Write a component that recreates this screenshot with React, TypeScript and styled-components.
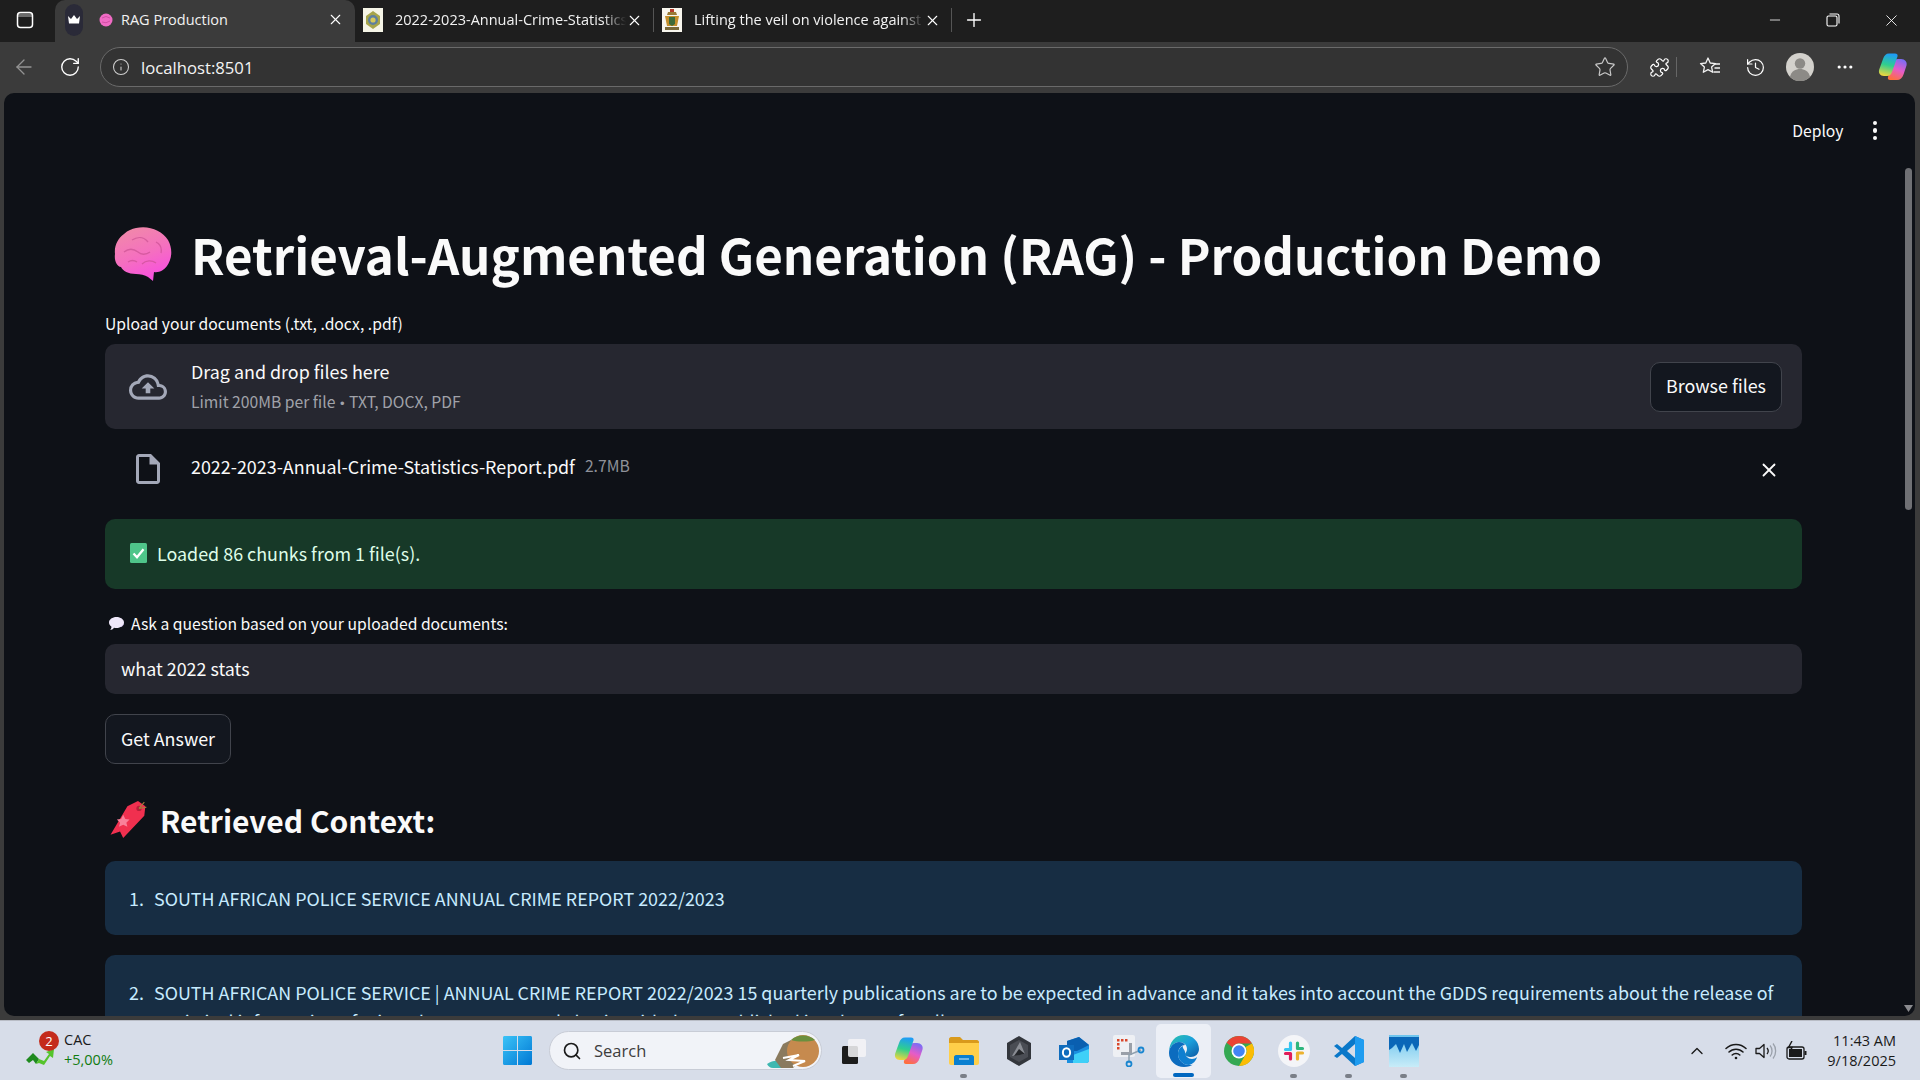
import React from "react";
import styled, { createGlobalStyle } from "styled-components";
import { ArrowLeft, RotateCw, Info, Star, Puzzle, History, MoreHorizontal, X, Plus, Minus, Search, ChevronUp } from "lucide-react";
import { MdOutlineCloudUpload, MdOutlineInsertDriveFile } from "react-icons/md";

const SANS = `"Noto Sans CJK SC", "Source Sans Pro", "Noto Sans", sans-serif`;
const UI = `"Open Sans", "Noto Sans", sans-serif`;

const Global = createGlobalStyle`
  html, body { margin: 0; padding: 0; height: 100%; background: #1f1f1f; overflow: hidden; }
  * { box-sizing: border-box; }
`;

const Screen = styled.div`
  width: 1920px; height: 1080px; display: flex; flex-direction: column; overflow: hidden;
  font-family: ${SANS}; background: #3b3b3b;
`;

/* ---------- tab strip ---------- */
const TabStrip = styled.div`
  height: 42px; background: #1e1e1e; display: flex; align-items: stretch; flex: none; color: #fff; font-family: ${UI};
`;
const SideToggle = styled.div`
  width: 55px; display: flex; align-items: center; justify-content: center; padding-right: 6px; padding-bottom: 2px;
`;
const Tab = styled.div<{ $active?: boolean; $w: number }>`
  width: ${p => p.$w}px; flex: none; display: flex; align-items: center;
  padding: 0 ${p => (p.$active ? 11 : 10)}px ${p => (p.$active ? 3 : 0)}px ${p => (p.$active ? 10 : 8)}px;
  background: ${p => (p.$active ? "#3b3b3b" : "transparent")};
  border-radius: ${p => (p.$active ? "10px 10px 0 0" : "0")};
  border-right: ${p => (p.$active ? "none" : "1px solid #555")};
  margin: ${p => (p.$active ? "0" : "8px 0 10px 0")};
`;
const TabTitle = styled.div<{ $fade?: boolean }>`
  flex: 1; min-width: 0; white-space: nowrap; overflow: hidden; font-size: 14.5px; line-height: 20px; color: #f2f2f2;
  ${p => p.$fade && `-webkit-mask-image: linear-gradient(90deg, #000 90%, transparent 100%); mask-image: linear-gradient(90deg, #000 90%, transparent 100%);`}
`;
const TabFavicon = styled.span`
  width: 20px; height: 24px; flex: none; margin-right: 12px; display: block;
`;
const CrownBadge = styled.span`
  width: 18px; height: 32px; border-radius: 9px; background: #2a2a38; display: flex; align-items: center; justify-content: center; flex: none; margin-right: 16px;
`;
const PinkDot = styled.span`
  width: 14px; height: 14px; flex: none; margin-right: 8px; display: block;
`;
const NewTab = styled.div`
  width: 44px; display: flex; align-items: center; justify-content: center; padding-bottom: 2px;
`;
const WindowControls = styled.div`
  margin-left: auto; display: flex; align-items: center; padding-bottom: 2px;
`;
const WinBtn = styled.div`
  width: 58px; height: 40px; display: flex; align-items: center; justify-content: center;
`;

/* ---------- toolbar ---------- */
const Toolbar = styled.div`
  height: 50px; flex: none; background: #3b3b3b; display: flex; align-items: center; color: #fff; font-family: ${UI};
`;
const NavBtn = styled.div<{ $w: number; $dim?: boolean }>`
  width: ${p => p.$w}px; flex: none; display: flex; align-items: center; justify-content: center;
  opacity: ${p => (p.$dim ? 0.45 : 1)};
`;
const Omnibox = styled.div`
  width: 1528px; height: 40px; flex: none; border: 1.5px solid #6a6a6a; border-radius: 20px; background: #333;
  display: flex; align-items: center; padding: 0 11px; margin: 0 14px 0 8px;
`;
const Url = styled.div`
  flex: 1; font-size: 16.7px; margin-left: 11px; color: #f4f4f4;
`;
const ToolSep = styled.div`
  width: 1px; height: 20px; background: #666; flex: none; margin-right: 7px;
`;
const Avatar = styled.svg`
  width: 28px; height: 28px; flex: none; display: block;
`;

/* ---------- page ---------- */
const Viewport = styled.div`
  flex: 1; min-height: 0; margin: 1px 5px 4px 4px; background: #0e1117; border-radius: 10px; position: relative; overflow: hidden; color: #fafafa;
`;
const AppHeader = styled.div`
  height: 75px; display: flex; align-items: center; justify-content: flex-end; padding: 0 30px 0 0; gap: 21px;
`;
const Deploy = styled.div`
  font-size: 15.7px; font-weight: 400; line-height: 24px;
`;
const Kebab = styled.div`
  display: flex; flex-direction: column; gap: 3px; padding: 0 8px;
`;
const KebabDot = styled.span`
  width: 4.5px; height: 4.5px; border-radius: 50%; background: #fafafa; display: block;
`;
const Main = styled.main`
  padding: 0 113px 0 101px;
`;
const TitleRow = styled.h1`
  margin: 43px 0 0; height: 86px; display: flex; align-items: center; font-size: 49.25px; font-weight: 700; line-height: 86px; white-space: nowrap; gap: 19px; padding-left: 9px;
`;
const FieldLabel = styled.div`
  font-size: 15.7px; line-height: 24px; margin-top: 15px; height: 24px; display: flex; align-items: center; gap: 6px;
`;
const Dropzone = styled.div`
  height: 85px; margin-top: 8px; background: #262730; border-radius: 10px; display: flex; align-items: center; padding: 0 20px;
`;
const DropIcon = styled.div`
  width: 38px; margin-right: 24px; margin-left: 4px; color: #a3a8b8; display: flex; justify-content: center; align-items: center;
`;
const DropText = styled.div`
  flex: 1; display: flex; flex-direction: column; gap: 5px; padding-top: 2px;
`;
const DropTitle = styled.div`
  font-size: 17.9px; line-height: 26px;
`;
const DropSub = styled.div`
  font-size: 15.7px; line-height: 26px; color: #a0a2a9;
`;
const Bullet = styled.span`
  font-family: "Liberation Sans", sans-serif; font-size: 13px; margin: 0 1px;
`;
const OutlineButton = styled.div<{ $w: number; $h: number }>`
  width: ${p => p.$w}px; height: ${p => p.$h}px; flex: none; background: #13171f; border: 1px solid #41444c; border-radius: 10px; display: flex; align-items: center; justify-content: center; padding-bottom: 3px; font-size: 17.9px; line-height: 26px;
`;
const FileRow = styled.div`
  height: 90px; display: flex; align-items: center; padding: 0 22px 0 25px;
`;
const FileIcon = styled.div`
  width: 36px; margin-right: 25px; color: #a3a8b8; display: flex; justify-content: center; margin-top: -11px;
`;
const FileName = styled.div`
  font-size: 17.9px; line-height: 26px; margin-top: -17px;
`;
const FileSize = styled.div`
  font-size: 15.7px; line-height: 26px; color: #8f9199; margin-left: 10px; margin-top: -16px;
`;
const FileClose = styled.div`
  margin-left: auto; display: flex; margin-top: -9px;
`;
const Success = styled.div`
  height: 70px; background: #173928; border-radius: 10px; display: flex; align-items: center; padding: 0 20px 3px 25px; gap: 10px; color: #dffde9; font-size: 17.9px; line-height: 26px;
`;
const Input = styled.div`
  height: 50px; margin-top: 8px; background: #262730; border-radius: 10px; display: flex; align-items: center; padding: 0 16px 3px; font-size: 17.9px; line-height: 26px;
`;
const AskLabel = styled(FieldLabel)`
  margin-top: 23px; padding-left: 4px; gap: 7px;
`;
const ButtonWrap = styled.div`
  margin-top: 20px; display: flex;
`;
const Heading = styled.h3`
  margin: 34px 0 0; height: 44px; display: flex; align-items: center; gap: 10px; font-size: 30px; line-height: 44px; font-weight: 700; white-space: nowrap; padding-left: 3px;
`;
const Notice = styled.div<{ $first?: boolean }>`
  margin-top: ${p => (p.$first ? 19 : 20)}px; background: #172d43; border-radius: 10px; padding: 23px 20px 22px 24px; color: #c7ebff; font-size: 17.9px; line-height: 29px; display: flex;
`;
const NoticeNum = styled.span`
  width: 25px; flex: none;
`;
const NoticeBody = styled.span`
  flex: 1; min-width: 0;
`;
const ScrollTrack = styled.div`
  position: absolute; top: 0; right: 3px; bottom: 0; width: 7px;
`;
const ScrollThumb = styled.div`
  position: absolute; top: 75px; height: 342px; left: 0; right: 0; background: #6f7074; border-radius: 4px;
`;
const ScrollArrow = styled.svg`
  position: absolute; left: -1px; bottom: 4px; width: 9px; height: 7px;
`;

/* ---------- taskbar ---------- */
const Taskbar = styled.div`
  height: 60px; flex: none; background: #d7dde9; border-top: 1px solid #b9bdc6; display: flex; align-items: center; color: #1a1a1a; font-family: ${UI};
`;
const Widget = styled.div`
  width: 490px; flex: none; display: flex; align-items: center; padding-left: 26px; gap: 9px;
`;
const WidgetIcon = styled.div`
  position: relative; width: 29px; height: 38px; flex: none;
`;
const WidgetBadge = styled.div`
  position: absolute; top: -1px; left: 13px; width: 20px; height: 20px; border-radius: 50%; background: #c42b1c; color: #fff; font-size: 13px; line-height: 20px; text-align: center;
`;
const WidgetText = styled.div`
  display: flex; flex-direction: column; font-size: 14.5px; line-height: 20px; margin-top: -2px;
`;
const WidgetDelta = styled.span`
  color: #107c10; font-size: 14.5px;
`;
const TaskSlot = styled.div<{ $active?: boolean; $dot?: boolean }>`
  width: 55px; height: 54px; flex: none; display: flex; align-items: center; justify-content: center; position: relative; border-radius: 5px;
  background: ${p => (p.$active ? "#eceff6" : "transparent")};
  ${p => p.$active && `&::after { content: ""; position: absolute; bottom: 1px; left: 17px; width: 21px; height: 4px; border-radius: 2px; background: #0067c0; }`}
  ${p => p.$dot && `&::after { content: ""; position: absolute; bottom: 0px; left: 24px; width: 7px; height: 4px; border-radius: 2px; background: #7a7f88; }`}
`;
const SearchPill = styled.div`
  width: 273px; height: 39px; flex: none; margin: 0 4px; background: #f1f3f8; border-radius: 20px; border: 1px solid #c8ccd6; display: flex; align-items: center; padding: 0 2px 0 12px; color: #3d3d3d; font-size: 16.5px; gap: 12px;
`;
const SearchText = styled.span`
  flex: 1;
`;
const Tray = styled.div`
  margin-left: auto; display: flex; align-items: center; padding-right: 24px;
`;
const TrayItem = styled.div<{ $w: number }>`
  width: ${p => p.$w}px; flex: none; display: flex; align-items: center; justify-content: center;
`;
const Clock = styled.div`
  display: flex; flex-direction: column; align-items: flex-end; font-size: 14.5px; line-height: 20px; margin-left: 13px; color: #1a1a1a;
`;

/* ---------- drawings ---------- */
const SidePanelIcon = () => (
  <svg width="18" height="18" viewBox="0 0 18 18" fill="none" stroke="#fff" strokeWidth="1.5">
    <rect x="1.5" y="1.5" width="15" height="15" rx="3" />
    <path d="M1.8 2.5h14.4v3.5H1.8z" fill="#fff" fillOpacity=".35" stroke="none" />
  </svg>
);
const Crown = () => (
  <svg width="14" height="12" viewBox="0 0 14 12"><path d="M1 2l3 3 3-4 3 4 3-3-1 7.5H2z" fill="#fff" /></svg>
);
const PinkBrain = () => (
  <PinkDot as="svg" viewBox="0 0 14 14"><ellipse cx="7" cy="7" rx="6.5" ry="6.5" fill="#f06bc4" /><path d="M3 5q4-3 8 0M3 9q4 2 8-1" stroke="#d24fa6" fill="none" /></PinkDot>
);
const CrestFav = () => (
  <TabFavicon as="svg" viewBox="0 0 20 24">
    <rect width="20" height="24" fill="#f5f4e6" />
    <path d="M10 3l7 5v8l-7 5-7-5V8z" fill="#a6a44a" />
    <circle cx="10" cy="12" r="5" fill="#5d7fa0" />
    <circle cx="10" cy="12" r="2.6" fill="#d6c85a" />
  </TabFavicon>
);
const ArmsFav = () => (
  <TabFavicon as="svg" viewBox="0 0 20 24">
    <rect width="20" height="24" fill="#f8f6ee" />
    <path d="M6 4h8l1 3H5z" fill="#9a7a35" />
    <path d="M3 8h14l-2 10H5z" fill="#c58f2c" />
    <path d="M7 9h6v7l-3 2-3-2z" fill="#3e6b3a" />
    <path d="M3 19h14v3H3z" fill="#7a6a3a" />
    <path d="M8 1h4v3H8z" fill="#b33a2a" />
  </TabFavicon>
);
const FavList = () => (
  <svg width="22" height="22" viewBox="0 0 22 22" fill="none" stroke="#f0f0f0" strokeWidth="1.3" strokeLinejoin="round">
    <path d="M9 2l2.2 5 5.3.6-3.900 3.5 1.1 5.2L9 13.6 4.3 16.3l1.1-5.2L1.5 7.6 6.8 7z" />
    <path d="M15 8h6M15.5 12H21M14.5 16H21" />
  </svg>
);
const CopilotIcon = ({ id, size = 30 }: { id: string; size?: number }) => (
  <svg width={size} height={size} viewBox="0 0 30 30">
    <defs>
      <linearGradient id={`${id}A`} x1="0.5" y1="0" x2="0.3" y2="1"><stop offset="0" stopColor="#1e9cf5" /><stop offset=".5" stopColor="#30cf8e" /><stop offset="1" stopColor="#f3d63c" /></linearGradient>
      <linearGradient id={`${id}B`} x1="0.7" y1="0" x2="0.3" y2="1"><stop offset="0" stopColor="#7a6cf5" /><stop offset=".5" stopColor="#e65cc8" /><stop offset="1" stopColor="#ff6f3c" /></linearGradient>
    </defs>
    <path d="M20 7h3c4 0 6.5 3 5.5 6.5l-3 9C24.5 26 22 28 19 28h-7c-2 0-2.5-1.5-2-3l5-14c.8-2.5 2.5-4 5-4z" fill={`url(#${id}B)`} />
    <path d="M11 1.5h6c2 0 3 1.3 2.5 3L14 20c-.9 2.5-2.5 4-5 4H6c-4 0-5.800-3-4.800-6.500l4-11C6.200 3.500 8 1.500 11 1.500z" fill={`url(#${id}A)`} />
  </svg>
);
const BrainEmoji = () => (
  <svg width="58" height="56" viewBox="0 0 58 56">
    <defs>
      <linearGradient id="brainG" x1="0.2" y1="0" x2="0.6" y2="1"><stop offset="0" stopColor="#f08aa8" /><stop offset=".55" stopColor="#f56fc0" /><stop offset="1" stopColor="#f84fe0" /></linearGradient>
    </defs>
    <path d="M22 2c12-3 26 2 32 12 5 9 4 19-1 26-3 4-8 7-13 6l-1 9-5-4c-3-2-8-3-12-3-8 0-13-3-15-7-4-1-7-6-6-13C0 20 4 12 10 8c4-4 8-5 12-6z" fill="url(#brainG)" />
    <path d="M18 14c6-4 12-3 16 2M10 26c5-4 10-3 14 0 3 3 8 3 12 0M28 38c4-4 10-4 14-1M42 16c4 2 6 6 5 11M14 36c3-2 6-2 9 0" stroke="#c74f90" strokeWidth="1.3" fill="none" opacity=".65" />
  </svg>
);
const BalloonEmoji = () => (
  <svg width="15" height="14" viewBox="0 0 15 14">
    <path d="M7.5 0C11.6 0 15 2.4 15 5.5S11.6 11 7.5 11c-.9 0-1.7-.1-2.5-.3C4 12 2.6 13 1 13c.9-.8 1.4-2 1.5-3.3C.9 8.7 0 7.2 0 5.5 0 2.4 3.4 0 7.5 0z" fill="#efe8fa" />
    <path d="M11 10c2-1 3.5-2.5 4-4.500C15 8 13.500 10 11 10z" fill="#c9b8e8" />
  </svg>
);
const CheckEmoji = () => (
  <svg width="17" height="20" viewBox="0 0 17 20">
    <rect width="17" height="20" rx="1.5" fill="#4fc58a" />
    <path d="M3.5 10.5l3.5 3.8 6.5-8" stroke="#fff" strokeWidth="2.3" fill="none" />
  </svg>
);
const TagEmoji = () => (
  <svg width="42" height="38" viewBox="0 0 39 36">
    <path d="M18 5L28 0l7 5-1 9L14 35l-3-6-9 3z" fill="#f0304f" />
    <path d="M14 13l2 4 4 .5-3 3 1 4-4-2-4 2 1-4-3-3 4-.5z" fill="#f9809a" />
    <circle cx="29" cy="7" r="2.5" fill="#b81f3a" />
    <path d="M29 7l5-6M29 7l7-1" stroke="#a5803c" strokeWidth="1" />
  </svg>
);
const WindowsLogo = () => (
  <svg width="29" height="29" viewBox="0 0 29 29">
    <defs><linearGradient id="winG" x1="0" y1="0" x2="1" y2="1"><stop offset="0" stopColor="#3bc3f7" /><stop offset="1" stopColor="#0078d4" /></linearGradient></defs>
    <path d="M0 1.5C0 .6.6 0 1.5 0H14v14H0zM15 0h12.5c.9 0 1.5.6 1.5 1.5V14H15zM0 15h14v14H1.5C.6 29 0 28.4 0 27.5zM15 15h14v12.5c0 .9-.6 1.5-1.5 1.500H15z" fill="url(#winG)" />
  </svg>
);
const BeachThumb = () => (
  <svg width="52" height="34" viewBox="0 0 52 34">
    <path d="M0 30c6-4 10-4 16-2l8 6H6c-3 0-5-2-6-4z" fill="#3fb8b0" />
    <path d="M8 26l8-16 8-4 8 22-6 6H14z" fill="#8a7a5e" />
    <circle cx="36" cy="17" r="16" fill="#c68a4e" />
    <path d="M24 6c6-6 18-6 24 0-6 2-18 2-24 0z" fill="#6a8f3e" />
    <path d="M16 24l16-3-10 5 16 1-12 5" stroke="#fff" strokeWidth="2" fill="none" />
  </svg>
);
const StoreIcon = () => (
  <svg width="24" height="26" viewBox="0 0 24 26">
    <rect x="0" y="8" width="16" height="18" rx="1.5" fill="#1c1c1c" />
    <rect x="6" y="1" width="18" height="18" rx="2" fill="#f5f5f7" fillOpacity=".86" />
  </svg>
);
const FolderIcon = () => (
  <svg width="30" height="28" viewBox="0 0 30 28">
    <path d="M0 2c0-1 1-2 2-2h9l3 3h14c1 0 2 1 2 2v3H0z" fill="#d99a1c" />
    <path d="M0 6h30v20c0 1-1 2-2 2H2c-1 0-2-1-2-2z" fill="#ffcf4a" />
    <path d="M5 20c0-1 1-2 2-2h16c1 0 2 1 2 2v8H5z" fill="#0a7fd0" />
    <path d="M10 22h10" stroke="#d5effc" strokeWidth="1" />
  </svg>
);
const ObsidianIcon = () => (
  <svg width="26" height="30" viewBox="0 0 26 30">
    <path d="M13 0l12 7v16l-12 7-12-7V7z" fill="#33363c" />
    <path d="M13 4l9 5v12l-9 5-9-5V9z" fill="#4a4d54" />
    <path d="M14 6l5 12-13 2z" fill="#8a8d94" />
    <path d="M13 13l6 5-11 2z" fill="#25272b" />
  </svg>
);
const OutlookIcon = () => (
  <svg width="30" height="28" viewBox="0 0 30 28">
    <path d="M8 4l12-4 10 8v15c0 2-1 3-3 3H8z" fill="#1a8fe0" />
    <path d="M8 4l12-4 10 8-12 6H8z" fill="#0a5fb0" />
    <path d="M14 18l16-6v11c0 2-1 3-3 3H14z" fill="#3fd0f8" />
    <rect x="0" y="8" width="15" height="15" fill="#0f6cbd" />
    <ellipse cx="7.5" cy="15.5" rx="3.6" ry="4.3" fill="none" stroke="#fff" strokeWidth="2" />
  </svg>
);
const SnipIcon = () => (
  <svg width="32" height="32" viewBox="0 0 32 32">
    <rect x="0" y="0" width="22" height="22" rx="2" fill="#eef0f4" />
    <path d="M4 4h2.500v2.500H4zM8 4h2.500v2.500H8zM12 4h2.500v2.500H12zM4 8h2.500v2.500H4zM4 12h2.500v2.500H4z" fill="#d9472b" />
    <path d="M8 17h8V8h3v12H8z" fill="#9aa0a9" />
    <path d="M28 15L16 20v8" stroke="#8fa0ae" strokeWidth="1.5" fill="none" />
    <circle cx="28" cy="15" r="2.5" fill="none" stroke="#1a86d0" strokeWidth="1.8" />
    <circle cx="16" cy="29" r="2.5" fill="none" stroke="#1a86d0" strokeWidth="1.8" />
  </svg>
);
const EdgeIcon = () => (
  <svg width="30" height="32" viewBox="0 0 30 32">
    <defs><linearGradient id="edgeG" x1="0" y1="0" x2="1" y2="1"><stop offset="0" stopColor="#2cc4a8" /><stop offset=".5" stopColor="#1a9fdc" /><stop offset="1" stopColor="#0c59a4" /></linearGradient></defs>
    <path d="M15 0c9 0 15 7 15 14 0 5-4 8-8 8-3 0-6-1-6-3 0-1 2-2 2-5 0-4-3-7-8-7-5 0-10 5-10 11C0 7 6 0 15 0z" fill="url(#edgeG)" />
    <path d="M0 18c0-6 5-11 10-11 3 0 5 1 6 3-3 0-7 3-7 9 0 6 5 11 11 11 2 0 4 0 5-1-3 2-6 3-10 3-8 0-15-6-15-14z" fill="#0c6cbf" />
    <path d="M16 17c0 4 3 7 7 7 2 0 4-1 5-2-1 4-4 7-8 8-6 0-11-5-11-11 0-4 2-7 5-8-1 2 2 4 2 6z" fill="#0f7fd0" />
  </svg>
);
const ChromeIcon = () => (
  <svg width="30" height="30" viewBox="0 0 30 30">
    <circle cx="15" cy="15" r="15" fill="#34a853" />
    <path d="M15 0a15 15 0 0 1 13 7.5H15a7.5 7.5 0 0 0-6.5 3.8L2.6 6.7A15 15 0 0 1 15 0z" fill="#ea4335" />
    <path d="M28 7.5A15 15 0 0 1 15 30l6.5-11.200A7.5 7.5 0 0 0 21.5 11z" fill="#fbbc04" />
    <circle cx="15" cy="15" r="7.5" fill="#fff" />
    <circle cx="15" cy="15" r="5.8" fill="#4285f4" />
  </svg>
);
const SlackIcon = () => (
  <svg width="32" height="32" viewBox="0 0 32 32">
    <circle cx="16" cy="16" r="16" fill="#f4f5f8" />
    <path d="M12.5 8v6.5M7.5 14.5h5" stroke="#36c5f0" strokeWidth="3.2" strokeLinecap="round" />
    <path d="M24.5 13.5h-5M19.5 8v5.500" stroke="#2eb67d" strokeWidth="3.2" strokeLinecap="round" />
    <path d="M19.5 24v-6M24.5 18h-5" stroke="#ecb22e" strokeWidth="3.2" strokeLinecap="round" />
    <path d="M7.5 18.5h5M12.5 18.5V24" stroke="#e01e5a" strokeWidth="3.2" strokeLinecap="round" />
  </svg>
);
const VSCodeIcon = () => (
  <svg width="30" height="30" viewBox="0 0 30 30">
    <path d="M21 0l9 4v22l-9 4L8 18l-5 4-3-2 6-5-6-5 3-2 5 4z" fill="#0a78c9" />
    <path d="M21 0l9 4v22l-9 4z" fill="#1f9cf0" />
    <path d="M21 8l-8 7 8 7z" fill="#d7dde9" />
  </svg>
);
const ChartApp = () => (
  <svg width="30" height="32" viewBox="0 0 30 32">
    <defs><linearGradient id="chartG" x1="0" y1="0" x2="0" y2="1"><stop offset="0" stopColor="#6cc4ee" /><stop offset="1" stopColor="#c8ecf8" /></linearGradient></defs>
    <rect width="30" height="32" fill="url(#chartG)" />
    <path d="M0 2h30v8l-3 6-4-8-5 9-3-8-4 9-4-9-4 4-3 2z" fill="#0a67b8" />
  </svg>
);
const WifiIcon = () => (
  <svg width="22" height="18" viewBox="0 0 22 18" fill="none" stroke="#1a1a1a" strokeWidth="1.5" strokeLinecap="round">
    <path d="M1 6.5c5.5-5.5 14.5-5.5 20 0M4 10c3.8-3.8 10.2-3.8 14 0M7.2 13c2.1-2.1 5.5-2.1 7.6 0" />
    <circle cx="11" cy="16" r="1.3" fill="#1a1a1a" stroke="none" />
  </svg>
);
const SpeakerIcon = () => (
  <svg width="22" height="18" viewBox="0 0 22 18" fill="none" strokeWidth="1.3">
    <path d="M1 6.5h3.5L9 2.5v13l-4.5-4H1z" stroke="#1a1a1a" strokeLinejoin="round" />
    <path d="M12 6c1.5 1.8 1.5 4.2 0 6" stroke="#1a1a1a" />
    <path d="M15 3.5c2.700 3 2.700 8 0 11M18 1.500c3.500 4 3.500 11 0 15" stroke="#9aa0aa" />
  </svg>
);
const BatteryIcon = () => (
  <svg width="22" height="20" viewBox="0 0 22 20" fill="none" stroke="#1a1a1a" strokeWidth="1.3">
    <rect x="1" y="6" width="17" height="12" rx="2" />
    <rect x="3" y="8" width="13" height="8" fill="#1a1a1a" stroke="none" />
    <path d="M19.5 10v4" strokeWidth="2" />
    <path d="M6 0L2.5 6.5H6L4.5 10" strokeWidth="1.4" />
  </svg>
);
const WidgetChart = () => (
  <svg width="29" height="20" viewBox="0 0 29 20" style={{ position: "absolute", left: 0, bottom: 3 }}>
    <path d="M0 13l7-7 6 6-3 5-3-4-4 3z" fill="#1f8a1f" />
    <path d="M10 17l3-5 5 2 5-7-3-2 8-3-1 9-3-2-6 9-5-2z" fill="#55c42c" />
  </svg>
);

const taskIcons: [React.ReactNode, boolean, boolean][] = [
  [<StoreIcon />, false, false],
  [<CopilotIcon id="cpTask" />, false, false],
  [<FolderIcon />, false, true],
  [<ObsidianIcon />, false, false],
  [<OutlookIcon />, false, false],
  [<SnipIcon />, false, false],
  [<EdgeIcon />, true, false],
  [<ChromeIcon />, false, false],
  [<SlackIcon />, false, true],
  [<VSCodeIcon />, false, true],
  [<ChartApp />, false, true],
];

export default function App() {
  return (
    <Screen>
      <Global />
      <TabStrip>
        <SideToggle><SidePanelIcon /></SideToggle>
        <Tab $active $w={300}>
          <CrownBadge><Crown /></CrownBadge>
          <PinkBrain />
          <TabTitle>RAG Production</TabTitle>
          <X size={17} strokeWidth={1.6} color="#fff" />
        </Tab>
        <Tab $w={299}>
          <CrestFav />
          <TabTitle $fade>2022-2023-Annual-Crime-Statistics</TabTitle>
          <X size={17} strokeWidth={1.6} color="#fff" />
        </Tab>
        <Tab $w={298}>
          <ArmsFav />
          <TabTitle $fade>Lifting the veil on violence against</TabTitle>
          <X size={17} strokeWidth={1.6} color="#fff" />
        </Tab>
        <NewTab><Plus size={22} strokeWidth={1.5} color="#fff" /></NewTab>
        <WindowControls>
          <WinBtn><Minus size={16} strokeWidth={1.2} color="#fff" /></WinBtn>
          <WinBtn>
            <svg width="14" height="14" viewBox="0 0 14 14" fill="none" stroke="#fff" strokeWidth="1.1">
              <rect x="1" y="3" width="10" height="10" rx="1.5" />
              <path d="M3.5 1h7.5c1 0 2 1 2 2v7.5" />
            </svg>
          </WinBtn>
          <WinBtn><X size={19} strokeWidth={1.1} color="#fff" /></WinBtn>
        </WindowControls>
      </TabStrip>

      <Toolbar>
        <NavBtn $w={48} $dim><ArrowLeft size={24} strokeWidth={1.3} /></NavBtn>
        <NavBtn $w={44}><RotateCw size={22} strokeWidth={1.5} /></NavBtn>
        <Omnibox>
          <Info size={18} strokeWidth={1.4} color="#cfcfcf" />
          <Url>localhost:8501</Url>
          <Star size={22} strokeWidth={1.3} color="#c8c8c8" />
        </Omnibox>
        <NavBtn $w={34}><Puzzle size={21} strokeWidth={1.4} /></NavBtn>
        <ToolSep />
        <NavBtn $w={52}><FavList /></NavBtn>
        <NavBtn $w={38}><History size={21} strokeWidth={1.4} /></NavBtn>
        <NavBtn $w={52}>
          <Avatar viewBox="0 0 28 28">
            <circle cx="14" cy="14" r="14" fill="#d3d1cc" />
            <circle cx="14" cy="10.5" r="5.2" fill="#8c8a86" />
            <path d="M4 24c1-6 6-8 10-8s9 2 10 8a14 14 0 0 1-20 0z" fill="#8c8a86" />
          </Avatar>
        </NavBtn>
        <NavBtn $w={38}><MoreHorizontal size={20} strokeWidth={1.8} /></NavBtn>
        <NavBtn $w={58}><CopilotIcon id="cpBar" /></NavBtn>
      </Toolbar>

      <Viewport>
        <AppHeader>
          <Deploy>Deploy</Deploy>
          <Kebab><KebabDot /><KebabDot /><KebabDot /></Kebab>
        </AppHeader>
        <Main>
          <TitleRow><BrainEmoji />Retrieval-Augmented Generation (RAG) - Production Demo</TitleRow>
          <FieldLabel>Upload your documents (.txt, .docx, .pdf)</FieldLabel>
          <Dropzone>
            <DropIcon><MdOutlineCloudUpload size={54} /></DropIcon>
            <DropText>
              <DropTitle>Drag and drop files here</DropTitle>
              <DropSub>Limit 200MB per file <Bullet>•</Bullet> TXT, DOCX, PDF</DropSub>
            </DropText>
            <OutlineButton $w={132} $h={50}>Browse files</OutlineButton>
          </Dropzone>
          <FileRow>
            <FileIcon><MdOutlineInsertDriveFile size={38} /></FileIcon>
            <FileName>2022-2023-Annual-Crime-Statistics-Report.pdf</FileName>
            <FileSize>2.7MB</FileSize>
            <FileClose><X size={22} strokeWidth={2} color="#fafafa" /></FileClose>
          </FileRow>
          <Success><CheckEmoji />Loaded 86 chunks from 1 file(s).</Success>
          <AskLabel><BalloonEmoji />Ask a question based on your uploaded documents:</AskLabel>
          <Input>what 2022 stats</Input>
          <ButtonWrap><OutlineButton $w={126} $h={50}>Get Answer</OutlineButton></ButtonWrap>
          <Heading><TagEmoji />Retrieved Context:</Heading>
          <Notice $first>
            <NoticeNum>1.</NoticeNum>
            <NoticeBody>SOUTH AFRICAN POLICE SERVICE ANNUAL CRIME REPORT 2022/2023</NoticeBody>
          </Notice>
          <Notice>
            <NoticeNum>2.</NoticeNum>
            <NoticeBody>SOUTH AFRICAN POLICE SERVICE | ANNUAL CRIME REPORT 2022/2023 15 quarterly publications are to be expected in advance and it takes into account the GDDS requirements about the release of statistical information of crime data on a quarterly basis, with dates published in advance for all users</NoticeBody>
          </Notice>
        </Main>
        <ScrollTrack>
          <ScrollThumb />
          <ScrollArrow viewBox="0 0 9 7"><path d="M4.5 7L0 0h9z" fill="#8a8b8f" /></ScrollArrow>
        </ScrollTrack>
      </Viewport>

      <Taskbar>
        <Widget>
          <WidgetIcon><WidgetChart /><WidgetBadge>2</WidgetBadge></WidgetIcon>
          <WidgetText>CAC<WidgetDelta>+5,00%</WidgetDelta></WidgetText>
        </Widget>
        <TaskSlot><WindowsLogo /></TaskSlot>
        <SearchPill>
          <Search size={20} strokeWidth={2} color="#1a1a1a" />
          <SearchText>Search</SearchText>
          <BeachThumb />
        </SearchPill>
        {taskIcons.map(([icon, active, dot], i) => (
          <TaskSlot key={i} $active={active} $dot={dot}>{icon}</TaskSlot>
        ))}
        <Tray>
          <TrayItem $w={46}><ChevronUp size={20} strokeWidth={1.6} /></TrayItem>
          <TrayItem $w={32}><WifiIcon /></TrayItem>
          <TrayItem $w={28}><SpeakerIcon /></TrayItem>
          <TrayItem $w={34}><BatteryIcon /></TrayItem>
          <Clock><span>11:43 AM</span><span>9/18/2025</span></Clock>
        </Tray>
      </Taskbar>
    </Screen>
  );
}
